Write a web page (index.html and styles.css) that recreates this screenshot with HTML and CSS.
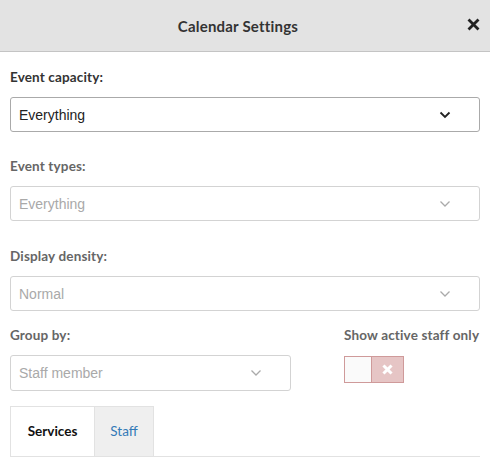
FILE: index.html
```html
<!DOCTYPE html>
<html>
<head>
<meta charset="utf-8">
<link rel="stylesheet" href="styles.css">
</head>
<body>
<div class="modal">
  <div class="header">
    <div class="title">Calendar Settings</div>
    <svg class="close" width="13" height="13" viewBox="0 0 13 13"><path d="M2.5 2.5 L10.5 10.5 M10.5 2.5 L2.5 10.5" stroke="#222" stroke-width="2.8" stroke-linecap="square"/></svg>
  </div>
  <div class="body">
    <div class="field f1">
      <div class="label">Event capacity:</div>
      <div class="select">
        <span>Everything</span>
        <svg class="chev" width="12" height="8" viewBox="0 0 12 8"><path d="M1.5 1.5 L6 6 L10.5 1.5" fill="none" stroke="#222" stroke-width="1.8"/></svg>
      </div>
    </div>
    <div class="field f2 disabled">
      <div class="label">Event types:</div>
      <div class="select">
        <span>Everything</span>
        <svg class="chev" width="12" height="8" viewBox="0 0 12 8"><path d="M1.5 1.5 L6 6 L10.5 1.5" fill="none" stroke="#aaa" stroke-width="1.3"/></svg>
      </div>
    </div>
    <div class="field f3 disabled">
      <div class="label">Display density:</div>
      <div class="select">
        <span>Normal</span>
        <svg class="chev" width="12" height="8" viewBox="0 0 12 8"><path d="M1.5 1.5 L6 6 L10.5 1.5" fill="none" stroke="#aaa" stroke-width="1.3"/></svg>
      </div>
    </div>
    <div class="row">
      <div class="field group disabled">
        <div class="label">Group by:</div>
        <div class="select">
          <span>Staff member</span>
          <svg class="chev" width="12" height="8" viewBox="0 0 12 8"><path d="M1.5 1.5 L6 6 L10.5 1.5" fill="none" stroke="#aaa" stroke-width="1.3"/></svg>
        </div>
      </div>
      <div class="active">
        <div class="label">Show active staff only</div>
        <div class="toggle">
          <div class="t-off"></div>
          <div class="t-x">
            <svg width="11" height="11" viewBox="0 0 11 11"><path d="M2.5 2.5 L8.5 8.5 M8.5 2.5 L2.5 8.5" stroke="#fff" stroke-width="3" stroke-linecap="square"/></svg>
          </div>
        </div>
      </div>
    </div>
    <div class="tabs">
      <div class="tab active-tab">Services</div>
      <div class="tab other-tab">Staff</div>
    </div>
  </div>
</div>
</body>
</html>
```
FILE: styles.css
```css
html, body {
  margin: 0;
  padding: 0;
  background: #fff;
  font-family: Lato, "Liberation Sans", sans-serif;
}
.modal {
  width: 490px;
}
.header {
  height: 51px;
  background: #e3e3e3;
  border-bottom: 1px solid #c4c4c4;
  display: flex;
  align-items: center;
  justify-content: center;
  position: relative;
}
.title {
  font-size: 15px;
  font-weight: 700;
  letter-spacing: 0.2px;
  color: #333;
  margin-left: -14px;
}
.close {
  position: absolute;
  right: 10px;
  top: 18px;
}
.body {
  padding: 0 10px;
}
.field {
  display: flex;
  flex-direction: column;
}
.label {
  font-size: 13.5px;
  font-weight: 700;
  letter-spacing: 0.15px;
  line-height: 18px;
  color: #333;
  height: 18px;
}
.f1 { margin-top: 16px; }
.f2 { margin-top: 25px; }
.f3 { margin-top: 26px; }
.field .label { margin-bottom: 11px; }
.disabled .label { color: #666; }
.select {
  height: 33px;
  border: 1px solid #c9c9c9;
  border-radius: 3px;
  display: flex;
  align-items: center;
  justify-content: space-between;
  padding: 0 28px 0 8px;
  font-family: "Liberation Sans", Arial, sans-serif;
  font-size: 14px;
  color: #222;
}
.f1 .select { border-color: #aaa; }
.disabled .select { color: #a9a9a9; border-color: #d3d3d3; }
.group .select { height: 34px; }
.chev { display: block; }
.row {
  display: flex;
  justify-content: space-between;
  margin-top: 15px;
}
.group { width: 281px; }
.active {
  width: 136px;
  display: flex;
  flex-direction: column;
}
.active .label { color: #666; margin-bottom: 12px; white-space: nowrap; }
.toggle {
  display: flex;
  width: 58px;
  height: 25px;
  border: 1px solid #cf9a9a;
}
.t-off {
  width: 26px;
  background: #fafafa;
  border-right: 1px solid #cf9a9a;
}
.t-x {
  flex: 1;
  background: #e6c5c5;
  display: flex;
  align-items: center;
  justify-content: center;
}
.t-x svg { display: block; }
.tabs {
  margin-top: 15px;
  display: flex;
  border-bottom: 1px solid #e2e2e2;
  height: 50px;
}
.tab {
  display: flex;
  align-items: center;
  justify-content: center;
  font-size: 13.5px;
  padding-bottom: 2px;
  border: 1px solid #e2e2e2;
  border-bottom: none;
}
.active-tab {
  width: 83px;
  font-weight: 700;
  color: #111;
  background: #fff;
}
.other-tab {
  width: 58px;
  border-left: none;
  background: #efefef;
  color: #337ab7;
}
```
